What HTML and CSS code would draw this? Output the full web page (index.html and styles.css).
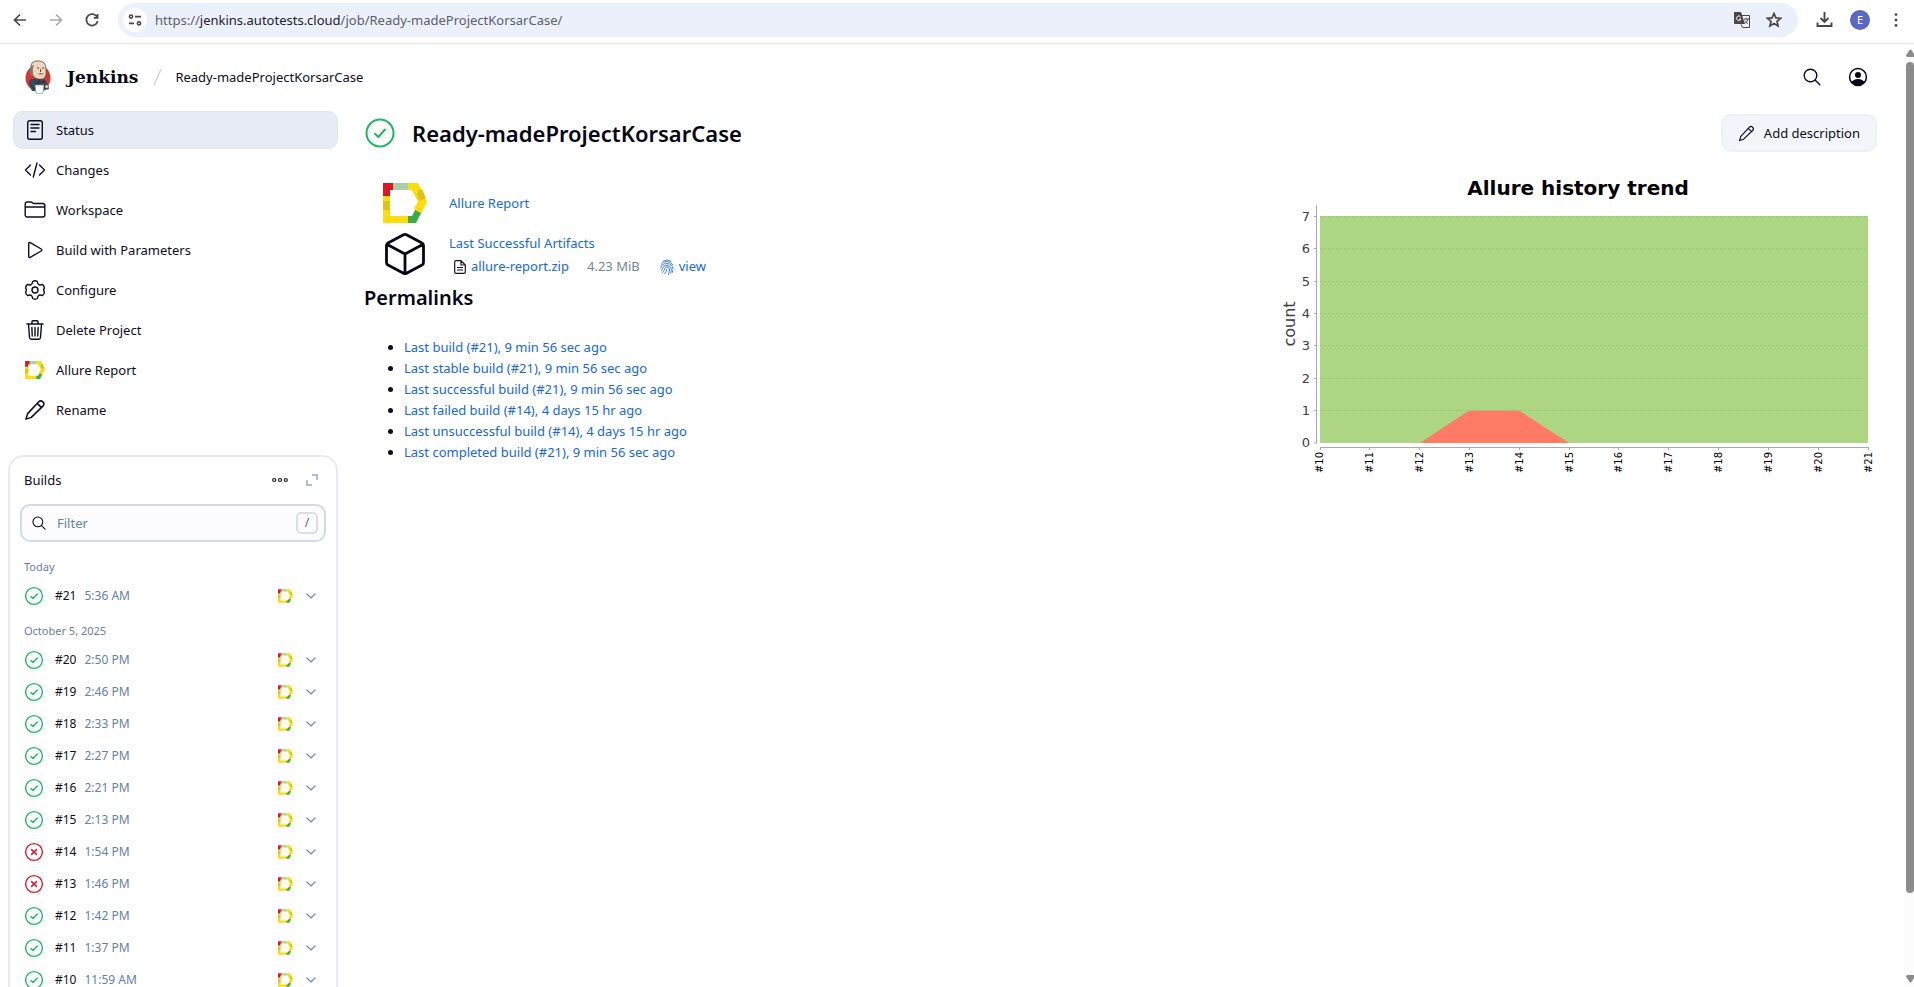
FILE: index.html
```html
<!DOCTYPE html>
<html lang="en">
<head>
<meta charset="utf-8">
<title>Ready-madeProjectKorsarCase [Jenkins]</title>
<link rel="stylesheet" href="styles.css">
</head>
<body>
<svg class="sprite" aria-hidden="true">
  <symbol id="allure" viewBox="0 0 44 40">
    <path fill="#ffdc0c" d="M0 12h7v21h20l5 7H0z"/>
    <path fill="#ffdc0c" d="M23 0h12l9 19-8 15-5-9 4-6-6-12h-6z"/>
    <path fill="#a8d0a4" d="M10 0h15v7H10z"/>
    <path fill="#e3131d" d="M0 0h10v7H7v6H0z"/>
    <path fill="#dfc11c" d="M0 18h7v9H0zM36 7l3-1 4 9-6 3-3-6z"/>
    <path fill="#3cab4a" d="M32 27l6 3-5 10h-8v-7h4z"/>
  </symbol>
  <symbol id="ok" viewBox="0 0 20 20">
    <circle cx="10" cy="10" r="8.4" fill="none" stroke="#1cb960" stroke-width="1.4"/>
    <path d="M7 10.4l2.1 2.1L13.2 8" fill="none" stroke="#1cb960" stroke-width="1.4" stroke-linecap="round" stroke-linejoin="round"/>
  </symbol>
  <symbol id="fail" viewBox="0 0 20 20">
    <circle cx="10" cy="10" r="8.4" fill="none" stroke="#dc1630" stroke-width="1.4"/>
    <path d="M7.6 7.6l4.8 4.8M12.4 7.6l-4.8 4.8" fill="none" stroke="#dc1630" stroke-width="1.5" stroke-linecap="round"/>
  </symbol>
  <symbol id="chevron" viewBox="0 0 10 6">
    <path d="M1 1l4 4 4-4" fill="none" stroke="#7488ad" stroke-width="1.2" stroke-linecap="round" stroke-linejoin="round"/>
  </symbol>
  <symbol id="pencil" viewBox="0 0 20 20">
    <path d="M13.2 2.7a2.7 2.7 0 0 1 4 3.8L6.6 16.7 1.8 18.3l1.5-5z M12 4l3.9 3.8" fill="none" stroke="currentColor" stroke-width="1.4" stroke-linejoin="round"/>
  </symbol>
  <symbol id="search" viewBox="0 0 18 18">
    <path d="M12.3 12.3L16.8 16.8" fill="none" stroke="currentColor" stroke-width="1.4" stroke-linecap="round"/>
    <circle cx="7.5" cy="7.5" r="6.3" fill="none" stroke="currentColor" stroke-width="1.4"/>
  </symbol>
</svg>

<div class="toolbar">
  <button class="tool back" aria-label="Back"><svg width="16" height="16" viewBox="0 0 16 16"><path d="M14 8H2.5M8 2.5L2.5 8 8 13.5"/></svg></button>
  <button class="tool forward" aria-label="Forward"><svg width="16" height="16" viewBox="0 0 16 16"><path d="M2 8h11.5M8 2.5L13.5 8 8 13.5"/></svg></button>
  <button class="tool" aria-label="Reload"><svg width="16" height="16" viewBox="0 0 16 16"><path d="M13.2 5.2A5.7 5.7 0 1 0 13.7 9M13.6 2v3.8H9.8"/></svg></button>
  <div class="omnibox">
    <button class="site-info" aria-label="Site information"><svg width="14" height="12" viewBox="0 0 14 12"><path d="M7 2.6h6M1 9.4h5"/><circle cx="3" cy="2.6" r="1.6"/><circle cx="11" cy="9.4" r="1.6"/></svg></button>
    <div class="url">https://<span class="host">jenkins.autotests.cloud</span>/job/Ready-madeProjectKorsarCase/</div>
    <button class="tool" aria-label="Translate"><svg width="18" height="18" viewBox="0 0 18 18"><path d="M9 4.5h7.5v12H9.5L8 13.5" stroke-width="1"/><path class="solid" d="M1 1h7l4 12H2a1 1 0 0 1-1-1z"/><path d="M7.6 5.8A2.3 2.3 0 1 0 8 8H6" stroke="#fff" stroke-width="1"/><path d="M11 8h5M13.5 7v1M15 8c-.5 2-2 3.5-3 4.5M12 9.5c.7 1.5 2 2.5 3 3" stroke-width="1"/></svg></button>
    <button class="tool" aria-label="Bookmark"><svg width="16" height="16" viewBox="0 0 16 16"><path d="M8 1.5l1.9 4.4 4.7.4-3.6 3.1 1.1 4.6L8 11.5 3.9 14 5 9.4 1.4 6.3l4.7-.4z"/></svg></button>
  </div>
  <button class="tool" aria-label="Downloads"><svg width="17" height="17" viewBox="0 0 17 17"><path d="M8.5 1v9.5M4.5 7l4 4 4-4M1.5 11.5V15h14v-3.5" stroke-width="1.9"/></svg></button>
  <button class="avatar">E</button>
  <button class="tool" aria-label="Menu"><svg width="16" height="16" viewBox="0 0 16 16"><g class="solid"><circle cx="8" cy="2.6" r="1.4"/><circle cx="8" cy="8" r="1.4"/><circle cx="8" cy="13.4" r="1.4"/></g></svg></button>
</div>

<div class="viewport">
  <div class="page">
    <header class="header">
      <a class="brand" href="#">
        <svg width="26" height="34" viewBox="0 0 26 34">
          <ellipse cx="13" cy="18" rx="12.5" ry="13" fill="#d33833"/>
          <path d="M4 20q3-2 6-1l8 0q4 2 5 6l1 4-7 2-10 0q-3-5-3-11z" fill="#335061"/>
          <path d="M6 8Q5 1 13 .8 21 .8 21 9q1 8-3 10-4 1-8-1Q6 15 6 8z" fill="#f0d6b7" stroke="#231f20" stroke-width=".6"/>
          <path d="M6.5 6Q4 8 5 12q0 3 2 4l1-3q-1-4 1-8z" fill="#81766c"/>
          <path d="M12 8h2M17 8h2M15.5 9v3" stroke="#4d4d4d" fill="none"/>
          <path d="M13 14q3-2 6 0-3 1-6 0z" fill="#81766c"/>
          <path d="M14 20l3 2 3-2v3l-3-1-3 1z" fill="#b02020" stroke="#231f20" stroke-width=".5"/>
          <path d="M9 19l3 5 2-3M4 22q2 4 5 7" fill="none" stroke="#1a2730" stroke-width=".7"/>
          <path d="M20 25q4-1 4 2 0 2-4 1z" fill="#f0d6b7" stroke="#231f20" stroke-width=".5"/>
          <path d="M10 25h9l-1 8q-3 1-7 0z" fill="#fff" stroke="#6b7a85" stroke-width=".6"/>
        </svg>
        <span>Jenkins</span>
      </a>
      <svg class="slash" width="9" height="18" viewBox="0 0 9 18"><path d="M8 1L1 17"/></svg>
      <a class="crumb" href="#">Ready-madeProjectKorsarCase</a>
      <div class="header-actions">
        <button aria-label="Search"><svg width="18" height="18"><use href="#search"/></svg></button>
        <button aria-label="Account"><svg width="20" height="20" viewBox="0 0 20 20"><circle cx="10" cy="10" r="8.4" fill="none" stroke="#060616" stroke-width="1.5"/><circle cx="10" cy="8" r="3" fill="#060616"/><path d="M3.5 15q2.5-3 6.5-3t6.5 3q-2.5 3.4-6.5 3.4T3.5 15z" fill="#060616"/></svg></button>
      </div>
    </header>

    <div class="columns">
      <aside class="sidebar">
        <nav class="tasks">
          <a class="task active" href="#"><svg width="22" height="22" viewBox="0 0 22 22"><rect x="3.7" y="1.7" width="14.6" height="18.6" rx="2"/><path d="M7 5.5h8M7 9h8M7 12.5h4.5"/></svg>Status</a>
          <a class="task" href="#"><svg width="22" height="22" viewBox="0 0 22 22"><path d="M6.5 6l-5 5 5 5M15.5 6l5 5-5 5M13 4L9.3 18"/></svg>Changes</a>
          <a class="task" href="#"><svg width="22" height="22" viewBox="0 0 22 22"><path d="M1.2 8V5a2 2 0 0 1 2-2h3.5q1 0 1.8.8t2 .7h8.3a2 2 0 0 1 2 2V16a2 2 0 0 1-2 2H3.2a2 2 0 0 1-2-2V8h19.6"/></svg>Workspace</a>
          <a class="task" href="#"><svg width="22" height="22" viewBox="0 0 22 22"><path d="M4.7 4.5v13q0 1.6 1.5.8l11-6.3q1.3-1 0-2L6.2 3.7q-1.5-.8-1.5.8z"/></svg>Build with Parameters</a>
          <a class="task" href="#"><svg width="22" height="22" viewBox="0 0 22 22"><circle cx="11" cy="11" r="3"/><path d="M8.7 2.5Q11 1 13.3 2.5q.3 2.6 1.8 3.3 1.5.4 3.3-.4 2 1.4 2 3.9-1.700 1.700 0 3.400 0 2.600-2 3.900-1.800-.8-3.300-.4-1.500.8-1.800 3.300-2.300 1.400-4.600 0-.3-2.600-1.800-3.300-1.500-.4-3.300.4-2-1.400-2-3.900 1.700-1.700 0-3.400 0-2.600 2-3.900 1.800.8 3.300.4 1.500-.8 1.800-3.300z"/></svg>Configure</a>
          <a class="task" href="#"><svg width="22" height="22" viewBox="0 0 22 22"><path d="M3 5h16M4.5 5l1 13.5q.2 1.700 1.800 1.700h7.400q1.600 0 1.800-1.700l1-13.500M8 5V2.500q0-.8.8-.8h4.400q.8 0 .8.8V5M11 8.500v8.500M7.900 8.500l.3 8.500M14.100 8.500l-.3 8.500"/></svg>Delete Project</a>
          <a class="task" href="#"><svg width="22" height="18"><use href="#allure"/></svg>Allure Report</a>
          <a class="task" href="#"><svg width="22" height="22"><use href="#pencil"/></svg>Rename</a>
        </nav>

        <section class="builds">
          <div class="builds-head">
            <h2>Builds</h2>
            <button aria-label="More"><svg width="16" height="6" viewBox="0 0 16 6"><g fill="none" stroke="#14142b" stroke-width="1.2"><circle cx="2.2" cy="3" r="1.5"/><circle cx="8" cy="3" r="1.5"/><circle cx="13.8" cy="3" r="1.5"/></g></svg></button>
            <button aria-label="Expand"><svg width="12" height="12" viewBox="0 0 12 12"><path d="M6 1h5v5M1 6v5h5" fill="none" stroke="#98a6bf" stroke-width="1.4"/></svg></button>
          </div>
          <label class="filter">
            <svg width="14" height="14"><use href="#search"/></svg>
            <input type="text" placeholder="Filter" aria-label="Filter builds">
            <kbd>/</kbd>
          </label>
          <h3>Today</h3>
          <ul>
            <li><svg class="st"><use href="#ok"/></svg><a href="#">#21</a><span>5:36 AM</span><svg class="al"><use href="#allure"/></svg><button aria-label="Build #21 menu"><svg class="ch"><use href="#chevron"/></svg></button></li>
          </ul>
          <h3>October 5, 2025</h3>
          <ul>
            <li><svg class="st"><use href="#ok"/></svg><a href="#">#20</a><span>2:50 PM</span><svg class="al"><use href="#allure"/></svg><button aria-label="Build #20 menu"><svg class="ch"><use href="#chevron"/></svg></button></li>
            <li><svg class="st"><use href="#ok"/></svg><a href="#">#19</a><span>2:46 PM</span><svg class="al"><use href="#allure"/></svg><button aria-label="Build #19 menu"><svg class="ch"><use href="#chevron"/></svg></button></li>
            <li><svg class="st"><use href="#ok"/></svg><a href="#">#18</a><span>2:33 PM</span><svg class="al"><use href="#allure"/></svg><button aria-label="Build #18 menu"><svg class="ch"><use href="#chevron"/></svg></button></li>
            <li><svg class="st"><use href="#ok"/></svg><a href="#">#17</a><span>2:27 PM</span><svg class="al"><use href="#allure"/></svg><button aria-label="Build #17 menu"><svg class="ch"><use href="#chevron"/></svg></button></li>
            <li><svg class="st"><use href="#ok"/></svg><a href="#">#16</a><span>2:21 PM</span><svg class="al"><use href="#allure"/></svg><button aria-label="Build #16 menu"><svg class="ch"><use href="#chevron"/></svg></button></li>
            <li><svg class="st"><use href="#ok"/></svg><a href="#">#15</a><span>2:13 PM</span><svg class="al"><use href="#allure"/></svg><button aria-label="Build #15 menu"><svg class="ch"><use href="#chevron"/></svg></button></li>
            <li><svg class="st"><use href="#fail"/></svg><a href="#">#14</a><span>1:54 PM</span><svg class="al"><use href="#allure"/></svg><button aria-label="Build #14 menu"><svg class="ch"><use href="#chevron"/></svg></button></li>
            <li><svg class="st"><use href="#fail"/></svg><a href="#">#13</a><span>1:46 PM</span><svg class="al"><use href="#allure"/></svg><button aria-label="Build #13 menu"><svg class="ch"><use href="#chevron"/></svg></button></li>
            <li><svg class="st"><use href="#ok"/></svg><a href="#">#12</a><span>1:42 PM</span><svg class="al"><use href="#allure"/></svg><button aria-label="Build #12 menu"><svg class="ch"><use href="#chevron"/></svg></button></li>
            <li><svg class="st"><use href="#ok"/></svg><a href="#">#11</a><span>1:37 PM</span><svg class="al"><use href="#allure"/></svg><button aria-label="Build #11 menu"><svg class="ch"><use href="#chevron"/></svg></button></li>
            <li><svg class="st"><use href="#ok"/></svg><a href="#">#10</a><span>11:59 AM</span><svg class="al"><use href="#allure"/></svg><button aria-label="Build #10 menu"><svg class="ch"><use href="#chevron"/></svg></button></li>
          </ul>
        </section>
      </aside>

      <main class="main">
        <div class="title-row">
          <svg width="32" height="32" viewBox="0 0 32 32" fill="none" stroke="#1cb960" stroke-width="2" stroke-linecap="round" stroke-linejoin="round"><circle cx="16" cy="16" r="13.5"/><path d="M11 16.7l3.3 3.3 6.7-7.5"/></svg>
          <h1>Ready-madeProjectKorsarCase</h1>
          <button class="describe"><svg width="17" height="17"><use href="#pencil"/></svg>Add description</button>
        </div>
        <div class="content">
          <div class="summary">
            <div class="row">
              <svg width="44" height="40"><use href="#allure"/></svg>
              <a href="#">Allure Report</a>
            </div>
            <div class="row">
              <svg width="44" height="44" viewBox="0 0 44 44" fill="none" stroke="#060616" stroke-width="2.8" stroke-linejoin="round" stroke-linecap="round"><path d="M20.5 2.7q1.5-.8 3 0L39 11q1.5.8 1.5 2.5v17q0 1.700-1.500 2.500l-15.500 8.300q-1.500.8-3 0L5 33q-1.500-.8-1.500-2.500v-17Q3.500 11.800 5 11zM4.300 12.500L22 22l17.700-9.500M22 22v19"/></svg>
              <div class="artifacts">
                <a href="#">Last Successful Artifacts</a>
                <div class="file">
                  <svg width="12" height="14" viewBox="0 0 12 14" fill="none" stroke="#14142b" stroke-width="1.2" stroke-linejoin="round"><path d="M2 .7h5L11.3 5v7q0 1.300-1.300 1.300H2Q.7 13.300.7 12V2Q.7.7 2 .7zM7 .7V5h4.300M3 7.500h6M3 10h6"/></svg>
                  <a href="#">allure-report.zip</a>
                  <span class="size">4.23 MiB</span>
                  <a class="view" href="#"><svg width="14" height="16" viewBox="0 0 14 16" fill="none" stroke="#4481e4" stroke-width="1" stroke-linecap="round"><path d="M3 2.200Q7-.5 11 2.200M1 5.500Q3 2.500 7 2.500t6 3.500M.8 9Q1.300 4.600 7 4.600q5.700 0 6 5.400M1.300 12Q2.500 10.500 2.700 9q.5-2.600 4.300-2.600T11.300 10q0 2-.5 4M2.600 13.600Q4.600 11.500 4.700 9.500 5 8 7 8t2.500 2q0 3-1 5.500M4.500 15Q6.900 12.500 7 10M12.800 11.500l-.5 2"/></svg>view</a>
                </div>
              </div>
            </div>
            <h2>Permalinks</h2>
            <ul>
              <li><a href="#">Last build (#21), 9 min 56 sec ago</a></li>
              <li><a href="#">Last stable build (#21), 9 min 56 sec ago</a></li>
              <li><a href="#">Last successful build (#21), 9 min 56 sec ago</a></li>
              <li><a href="#">Last failed build (#14), 4 days 15 hr ago</a></li>
              <li><a href="#">Last unsuccessful build (#14), 4 days 15 hr ago</a></li>
              <li><a href="#">Last completed build (#21), 9 min 56 sec ago</a></li>
            </ul>
          </div>
          <svg class="chart" width="600" height="310" viewBox="0 0 600 310" role="img" aria-label="Allure history trend">
            <text class="chart-title" x="301" y="25" text-anchor="middle">Allure history trend</text>
            <path fill="#add683" d="M43 46h548v227H43z"/>
            <path fill="#ff7b66" d="M143 273l49-32.500h50l50 32.500z"/>
            <path class="grid" d="M43 46.500h548M43 78.500h548M43 111.500h548M43 143.500h548M43 175.500h548M43 208.500h548M43 240.500h548"/>
            <path class="axis" d="M39.500 35v238M37 46.500h3M37 78.500h3M37 111.500h3M37 143.500h3M37 175.500h3M37 208.500h3M37 240.500h3M37 273h3M43 277.500h549M43.500 277v3M92.500 277v3M142.500 277v3M192.500 277v3M242.500 277v3M292.500 277v3M341.500 277v3M391.500 277v3M441.500 277v3M491.500 277v3M541.500 277v3M591.500 277v3"/>
            <g class="ylabels">
              <text x="33" y="51">7</text><text x="33" y="83">6</text><text x="33" y="116">5</text><text x="33" y="148">4</text>
              <text x="33" y="180">3</text><text x="33" y="213">2</text><text x="33" y="245">1</text><text x="33" y="277">0</text>
            </g>
            <text class="ytitle" transform="translate(18 154) rotate(-90)">count</text>
            <g class="xlabels">
              <text transform="translate(46 282) rotate(-90)">#10</text><text transform="translate(96 282) rotate(-90)">#11</text>
              <text transform="translate(146 282) rotate(-90)">#12</text><text transform="translate(196 282) rotate(-90)">#13</text>
              <text transform="translate(246 282) rotate(-90)">#14</text><text transform="translate(296 282) rotate(-90)">#15</text>
              <text transform="translate(345 282) rotate(-90)">#16</text><text transform="translate(395 282) rotate(-90)">#17</text>
              <text transform="translate(445 282) rotate(-90)">#18</text><text transform="translate(495 282) rotate(-90)">#19</text>
              <text transform="translate(545 282) rotate(-90)">#20</text><text transform="translate(595 282) rotate(-90)">#21</text>
            </g>
          </svg>
        </div>
      </main>
    </div>
  </div>
  <div class="scrollbar" aria-hidden="true">
    <svg width="10" height="8" viewBox="0 0 10 8"><path d="M2 6.500L5.500 1q1-1 2 0L11 6.500 10 8H3z"/></svg>
    <div class="track"><div class="thumb"></div></div>
    <svg width="10" height="8" viewBox="0 0 10 8"><path d="M2 1.500L5.500 7q1 1 2 0L11 1.500 10 0H3z"/></svg>
  </div>
</div>
</body>
</html>
```
FILE: styles.css
```css
* { box-sizing: border-box; }
html, body { height: 100%; }
body {
  margin: 0;
  display: flex;
  flex-direction: column;
  overflow: hidden;
  background: #fff;
  color: #0d0d20;
  font: 13px/20px "Noto Sans", "Open Sans", sans-serif;
}
h1, h2, h3, ul { margin: 0; padding: 0; }
a { color: #1668dc; text-decoration: none; }
button {
  display: flex;
  align-items: center;
  justify-content: center;
  padding: 0;
  border: 0;
  background: none;
  color: inherit;
  font: inherit;
}
svg { display: block; flex: none; }
.sprite { position: absolute; width: 0; height: 0; }

/* Browser toolbar */
.toolbar {
  flex: none;
  display: flex;
  align-items: center;
  height: 44px;
  padding: 0 10px 4px 12px;
  border-bottom: 1px solid #dfe3e6;
}
.tool { width: 16px; height: 24px; }
.tool svg { fill: none; stroke: #474747; stroke-width: 1.7; }
.tool .solid { fill: #474747; stroke: none; }
.back, .forward { margin-right: 20px; }
.forward svg { stroke: #a9a9a9; }
.omnibox {
  flex: 1;
  display: flex;
  align-items: center;
  gap: 16px;
  height: 34px;
  margin: 0 18px;
  padding: 0 16px 0 5px;
  border-radius: 17px;
  background: #ebf0fa;
}
.site-info { width: 24px; height: 24px; border-radius: 12px; background: #fff; }
.site-info svg { fill: none; stroke: #474747; stroke-width: 1.6; }
.url { flex: 1; margin-left: -8px; color: #5c5f66; }
.host { color: #202124; }
.avatar {
  width: 20px;
  height: 20px;
  margin: 0 18px;
  border-radius: 10px;
  background: #5b67c0;
  color: #fff;
  font-size: 11px;
}

/* Page */
.viewport { flex: 1; display: flex; min-height: 0; }
.page { flex: 1; min-width: 0; overflow: hidden; }
.header { display: flex; align-items: center; padding: 16px 36px 17px 25px; }
.brand {
  display: flex;
  align-items: center;
  gap: 16px;
  color: #060616;
  font: bold 17px/34px "DejaVu Serif", serif;
}
.slash { margin: 0 13px 0 15px; fill: none; stroke: #ccd0d8; stroke-width: 1.4; }
.crumb { color: #0d0d20; }
.header-actions { display: flex; gap: 27px; margin-left: auto; }

.columns { display: flex; align-items: flex-start; gap: 26px; padding: 0 27px 0 8px; }
.sidebar { flex: none; width: 330px; }
.tasks { display: flex; flex-direction: column; gap: 2px; margin-left: 5px; }
.task {
  display: flex;
  align-items: center;
  gap: 10px;
  height: 38px;
  padding: 0 11px;
  border-radius: 10px;
  color: #0d0d20;
}
.task svg { fill: none; stroke: currentColor; stroke-width: 1.4; stroke-linecap: round; stroke-linejoin: round; }
.task use { stroke: none; }
.task.active { background: #e7ebf3; box-shadow: inset 0 0 0 1px #e1e6ef; }

.builds { margin-top: 26px; padding: 0 10px 16px; border: 2px solid #e8eaf3; border-radius: 16px; }
.builds-head { display: flex; align-items: center; height: 46px; padding: 0 8px 0 4px; gap: 18px; }
.builds-head h2 { flex: 1; font-size: 13px; font-weight: 400; }
.filter {
  display: flex;
  align-items: center;
  gap: 11px;
  height: 38px;
  margin: 1px 0 6px;
  padding: 0 6px 0 10px;
  border: 2px solid #d3d9e5;
  border-radius: 10px;
  background: #fcfcfe;
}
.filter input { flex: 1; min-width: 0; padding: 0; border: 0; outline: 0; background: none; font: inherit; }
.filter input::placeholder { color: #6580a8; opacity: 1; }
kbd {
  width: 22px;
  height: 22px;
  border: 2px solid #d9dee8;
  border-radius: 5px;
  color: #56658a;
  font: 12px/18px "Noto Sans", sans-serif;
  text-align: center;
}
.builds h3 { height: 32px; padding: 10px 4px 0; color: #6580a8; font-size: 11px; font-weight: 400; line-height: 18px; }
.builds ul { list-style: none; }
.builds li { display: flex; align-items: center; height: 32px; padding: 0 10px 0 4px; font-size: 12px; }
.builds li a { margin: 0 8px 0 11px; color: #0d0d20; }
.builds li span { flex: 1; color: #6580a8; }
.st { width: 20px; height: 20px; }
.al { width: 15px; height: 14px; margin-right: 13px; }
.ch { width: 10px; height: 6px; }

.main { flex: 1; min-width: 0; padding-top: 3px; }
.title-row { display: flex; align-items: center; gap: 16px; }
h1 { flex: 1; color: #060616; font-size: 22px; font-weight: 600; line-height: 32px; }
.describe {
  gap: 9px;
  height: 38px;
  padding: 0 15px;
  border: 2px solid #edf1f6;
  border-radius: 10px;
  background: #f2f5f9;
}
.content { display: flex; justify-content: space-between; }
.summary { padding-top: 27px; }
.row { display: flex; align-items: center; gap: 22px; height: 48px; margin: 0 0 3px 19px; }
.artifacts { padding-top: 2px; line-height: 23px; }
.file { display: flex; align-items: center; padding-left: 5px; }
.file a { margin-left: 5px; }
.size { margin: 0 15px 0 18px; color: #75839c; }
.view { display: flex; align-items: center; gap: 5px; }
.summary h2 { margin-top: 8px; color: #060616; font-size: 20px; font-weight: 600; line-height: 24px; }
.summary ul { margin-top: 27px; padding-left: 40px; line-height: 21px; }

/* Trend chart */
.chart { margin-top: 18px; font-family: "DejaVu Sans", sans-serif; }
.chart-title { font-size: 20px; font-weight: 700; fill: #000; }
.grid { fill: none; stroke: #9cc476; stroke-dasharray: 2 2; }
.axis { fill: none; stroke: #a8a8a8; }
.ylabels { font-size: 13px; fill: #404040; text-anchor: end; }
.ytitle { font-size: 16px; fill: #404040; text-anchor: middle; }
.xlabels { font-size: 10px; fill: #000; text-anchor: end; }

/* Page scrollbar */
.scrollbar { flex: none; display: flex; flex-direction: column; width: 10px; padding: 5px 0 4px; background: #fcfcfc; }
.scrollbar svg { fill: #8b8b8b; }
.track { flex: 1; padding: 5px 0 0 2px; }
.thumb { height: 91%; border-radius: 6px; background: #8b8b8b; }
```
